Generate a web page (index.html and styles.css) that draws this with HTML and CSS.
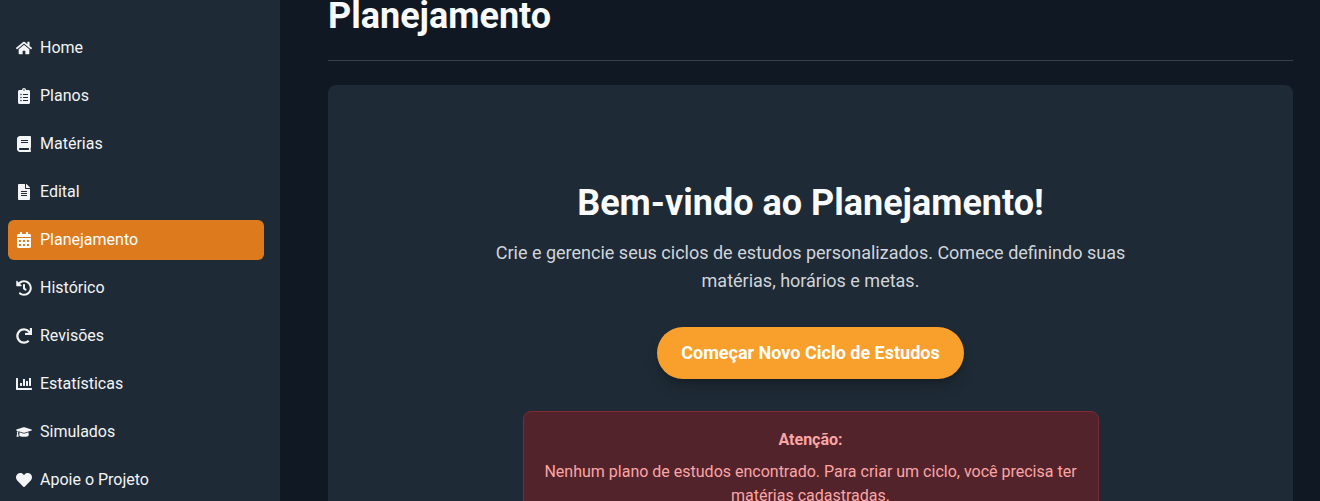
FILE: index.html
```html
<!DOCTYPE html>
<html lang="pt-BR">
<head>
<meta charset="utf-8">
<title>Planejamento</title>
<link rel="stylesheet" href="styles.css">
</head>
<body>
<div class="app">
  <nav class="sidebar">
    <a class="nav-item"><svg class="icon" viewBox="0 0 576 512"><path d="M280.37 148.26L96 300.11V464a16 16 0 0 0 16 16l112.06-.29a16 16 0 0 0 15.92-16V368a16 16 0 0 1 16-16h64a16 16 0 0 1 16 16v95.64a16 16 0 0 0 16 16.05L464 480a16 16 0 0 0 16-16V300L295.67 148.26a12.19 12.19 0 0 0-15.3 0zM571.6 251.47L488 182.56V44.05a12 12 0 0 0-12-12h-56a12 12 0 0 0-12 12v72.61L318.47 43a48 48 0 0 0-61 0L4.34 251.47a12 12 0 0 0-1.6 16.9l25.5 31A12 12 0 0 0 45.15 301l235.22-193.74a12.19 12.19 0 0 1 15.3 0L530.9 301a12 12 0 0 0 16.9-1.6l25.5-31a12 12 0 0 0-1.7-16.93z"/></svg><span class="nav-label">Home</span></a>
    <a class="nav-item"><svg class="icon" viewBox="0 0 384 512"><path d="M336 64h-80c0-35.3-28.7-64-64-64s-64 28.7-64 64H48C21.5 64 0 85.5 0 112v352c0 26.5 21.5 48 48 48h288c26.5 0 48-21.5 48-48V112c0-26.5-21.5-48-48-48zM96 424c-13.3 0-24-10.7-24-24s10.7-24 24-24 24 10.7 24 24-10.7 24-24 24zm0-96c-13.3 0-24-10.7-24-24s10.7-24 24-24 24 10.7 24 24-10.7 24-24 24zm0-96c-13.3 0-24-10.7-24-24s10.7-24 24-24 24 10.7 24 24-10.7 24-24 24zm96-192c13.3 0 24 10.7 24 24s-10.7 24-24 24-24-10.7-24-24 10.7-24 24-24zm128 368c0 4.4-3.6 8-8 8H168c-4.4 0-8-3.6-8-8v-16c0-4.4 3.6-8 8-8h144c4.4 0 8 3.6 8 8v16zm0-96c0 4.4-3.6 8-8 8H168c-4.4 0-8-3.6-8-8v-16c0-4.4 3.6-8 8-8h144c4.4 0 8 3.6 8 8v16zm0-96c0 4.4-3.6 8-8 8H168c-4.4 0-8-3.6-8-8v-16c0-4.4 3.6-8 8-8h144c4.4 0 8 3.6 8 8v16z"/></svg><span class="nav-label">Planos</span></a>
    <a class="nav-item"><svg class="icon" viewBox="0 0 448 512"><path d="M448 360V24c0-13.3-10.7-24-24-24H96C43 0 0 43 0 96v320c0 53 43 96 96 96h328c13.3 0 24-10.7 24-24v-16c0-7.5-3.5-14.3-8.9-18.7-4.2-15.4-4.2-59.3 0-74.7 5.4-4.3 8.9-11.1 8.9-18.6zM128 134c0-3.3 2.7-6 6-6h212c3.3 0 6 2.7 6 6v20c0 3.3-2.7 6-6 6H134c-3.3 0-6-2.7-6-6v-20zm0 64c0-3.3 2.7-6 6-6h212c3.3 0 6 2.7 6 6v20c0 3.3-2.7 6-6 6H134c-3.3 0-6-2.7-6-6v-20zm253.4 250H96c-17.7 0-32-14.3-32-32 0-17.6 14.4-32 32-32h285.4c-1.9 17.1-1.9 46.9 0 64z"/></svg><span class="nav-label">Matérias</span></a>
    <a class="nav-item"><svg class="icon" viewBox="0 0 384 512"><path d="M224 136V0H24C10.7 0 0 10.7 0 24v464c0 13.3 10.7 24 24 24h336c13.3 0 24-10.7 24-24V160H248c-13.2 0-24-10.8-24-24zm64 236c0 6.6-5.4 12-12 12H108c-6.6 0-12-5.4-12-12v-8c0-6.6 5.4-12 12-12h168c6.6 0 12 5.4 12 12v8zm0-64c0 6.6-5.4 12-12 12H108c-6.6 0-12-5.4-12-12v-8c0-6.6 5.4-12 12-12h168c6.6 0 12 5.4 12 12v8zm0-72v8c0 6.6-5.4 12-12 12H108c-6.6 0-12-5.4-12-12v-8c0-6.6 5.4-12 12-12h168c6.6 0 12 5.4 12 12zm96-114.1v6.1H256V0h6.1c6.4 0 12.5 2.5 17 7l97.9 98c4.5 4.5 7 10.6 7 16.9z"/></svg><span class="nav-label">Edital</span></a>
    <a class="nav-item active"><svg class="icon" viewBox="0 0 448 512"><path d="M0 464c0 26.5 21.5 48 48 48h352c26.5 0 48-21.5 48-48V192H0v272zm320-196c0-6.6 5.4-12 12-12h40c6.6 0 12 5.4 12 12v40c0 6.6-5.4 12-12 12h-40c-6.6 0-12-5.4-12-12v-40zm0 128c0-6.6 5.4-12 12-12h40c6.6 0 12 5.4 12 12v40c0 6.6-5.4 12-12 12h-40c-6.6 0-12-5.4-12-12v-40zM192 268c0-6.6 5.4-12 12-12h40c6.6 0 12 5.4 12 12v40c0 6.6-5.4 12-12 12h-40c-6.6 0-12-5.4-12-12v-40zm0 128c0-6.6 5.4-12 12-12h40c6.6 0 12 5.4 12 12v40c0 6.6-5.4 12-12 12h-40c-6.6 0-12-5.4-12-12v-40zM64 268c0-6.6 5.4-12 12-12h40c6.6 0 12 5.4 12 12v40c0 6.6-5.4 12-12 12H76c-6.6 0-12-5.4-12-12v-40zm0 128c0-6.6 5.4-12 12-12h40c6.6 0 12 5.4 12 12v40c0 6.6-5.4 12-12 12H76c-6.6 0-12-5.4-12-12v-40zM400 64h-48V16c0-8.8-7.2-16-16-16h-32c-8.8 0-16 7.2-16 16v48H160V16c0-8.8-7.2-16-16-16h-32c-8.8 0-16 7.2-16 16v48H48C21.5 64 0 85.5 0 112v48h448v-48c0-26.5-21.5-48-48-48z"/></svg><span class="nav-label">Planejamento</span></a>
    <a class="nav-item"><svg class="icon" viewBox="0 0 512 512"><path d="M504 255.531c.253 136.64-111.18 248.372-247.82 248.468-59.015.042-113.223-20.53-155.822-54.911-11.077-8.94-11.905-25.541-1.839-35.607l11.267-11.267c8.609-8.609 22.353-9.551 31.891-1.984C173.062 425.135 212.781 440 256 440c101.705 0 184-82.311 184-184 0-101.705-82.311-184-184-184-48.814 0-93.149 18.969-126.068 49.932l50.754 50.754c10.08 10.08 2.941 27.314-11.313 27.314H24c-8.837 0-16-7.163-16-16V38.627c0-14.254 17.234-21.393 27.314-11.314l49.372 49.372C129.209 34.136 189.552 8 256 8c136.81 0 247.747 110.78 248 247.531zm-180.912 78.784l9.823-12.63c8.138-10.463 6.253-25.542-4.21-33.679L288 256.349V152c0-13.255-10.745-24-24-24h-16c-13.255 0-24 10.745-24 24v135.651l65.409 50.874c10.463 8.137 25.541 6.253 33.679-4.21z"/></svg><span class="nav-label">Histórico</span></a>
    <a class="nav-item"><svg class="icon" viewBox="0 0 512 512"><path d="M500.33 0h-47.41a12 12 0 0 0-12 12.57l4 82.76A247.42 247.42 0 0 0 256 8C119.34 8 7.9 119.53 8 256.19 8.1 393.07 119.1 504 256 504a247.1 247.1 0 0 0 166.18-63.91 12 12 0 0 0 .48-17.43l-34-34a12 12 0 0 0-16.38-.55A176 176 0 1 1 402.1 157.8l-101.53-4.87a12 12 0 0 0-12.57 12v47.41a12 12 0 0 0 12 12h200.33a12 12 0 0 0 12-12V12a12 12 0 0 0-12-12z"/></svg><span class="nav-label">Revisões</span></a>
    <a class="nav-item"><svg class="icon" viewBox="0 0 512 512"><path d="M332.8 320h38.4c6.4 0 12.8-6.4 12.8-12.8V172.8c0-6.4-6.4-12.8-12.8-12.8h-38.4c-6.4 0-12.8 6.4-12.8 12.8v134.4c0 6.4 6.4 12.8 12.8 12.8zm96 0h38.4c6.4 0 12.8-6.4 12.8-12.8V76.8c0-6.4-6.4-12.8-12.8-12.8h-38.4c-6.4 0-12.8 6.4-12.8 12.8v230.4c0 6.4 6.4 12.8 12.8 12.8zm-288 0h38.4c6.4 0 12.8-6.4 12.8-12.8v-70.4c0-6.4-6.4-12.8-12.8-12.8h-38.4c-6.4 0-12.8 6.4-12.8 12.8v70.4c0 6.4 6.4 12.8 12.8 12.8zm96 0h38.4c6.4 0 12.8-6.4 12.8-12.8V108.8c0-6.4-6.4-12.8-12.8-12.8h-38.4c-6.4 0-12.8 6.4-12.8 12.8v198.4c0 6.4 6.4 12.8 12.8 12.8zM496 384H64V80c0-8.84-7.16-16-16-16H16C7.16 64 0 71.16 0 80v336c0 17.67 14.33 32 32 32h464c8.84 0 16-7.16 16-16v-32c0-8.84-7.16-16-16-16z"/></svg><span class="nav-label">Estatísticas</span></a>
    <a class="nav-item"><svg class="icon" viewBox="0 0 640 512"><path d="M622.34 153.2L343.4 67.5c-15.2-4.67-31.6-4.67-46.79 0L17.66 153.2c-23.54 7.23-23.54 38.36 0 45.59l48.63 14.94c-10.67 13.19-17.23 29.28-17.88 46.9C38.78 266.15 32 276.11 32 288c0 10.78 5.68 19.85 13.86 25.65L20.33 428.53C18.11 438.52 25.71 448 35.94 448h56.11c10.24 0 17.84-9.48 15.62-19.47L82.14 313.65C90.32 307.85 96 298.78 96 288c0-11.57-6.47-21.25-15.66-26.87.76-15.02 8.44-28.3 20.69-36.72L296.6 284.5c9.06 2.78 26.44 6.25 46.79 0l278.95-85.7c23.55-7.24 23.55-38.36 0-45.6zM352.79 315.09c-28.53 8.76-52.84 3.92-65.59 0l-145.02-44.55L128 384c0 35.35 85.96 64 192 64s192-28.65 192-64l-14.18-113.47-145.03 44.56z"/></svg><span class="nav-label">Simulados</span></a>
    <a class="nav-item"><svg class="icon" viewBox="0 0 512 512"><path d="M462.3 62.6C407.5 15.9 326 24.3 275.7 76.2L256 96.5l-19.7-20.3C186.1 24.3 104.5 15.9 49.7 62.6c-62.8 53.6-66.1 149.8-9.9 207.9l193.5 199.8c12.5 12.9 32.8 12.9 45.3 0l193.5-199.8c56.3-58.1 53-154.3-9.8-207.9z"/></svg><span class="nav-label">Apoie o Projeto</span></a>
  </nav>
  <main class="main">
    <h1 class="page-title">Planejamento</h1>
    <section class="card">
      <h2 class="card-title">Bem-vindo ao Planejamento!</h2>
      <p class="card-text">Crie e gerencie seus ciclos de estudos personalizados. Comece definindo suas matérias, horários e metas.</p>
      <button class="cta">Começar Novo Ciclo de Estudos</button>
      <div class="alert">
        <p class="alert-title">Atenção:</p>
        <p class="alert-text">Nenhum plano de estudos encontrado. Para criar um ciclo, você precisa ter matérias cadastradas.</p>
      </div>
    </section>
  </main>
</div>
</body>
</html>
```
FILE: styles.css
```css
* { box-sizing: border-box; }
html, body { margin: 0; height: 100%; overflow: hidden; }
body { background: #101824; color: #f3f4f6; font-family: Roboto, "Liberation Sans", sans-serif; }
.app { display: flex; height: 501px; overflow: hidden; }
.sidebar { width: 280px; flex: none; background: #1e2a35; padding: 28px 16px 0 8px; display: flex; flex-direction: column; gap: 8px; }
.nav-item { display: flex; align-items: center; gap: 8px; height: 40px; flex: none; padding: 0 8px; border-radius: 6px; font-size: 16px; color: #f3f4f6; }
.nav-item.active { background: #dd7a1e; color: #fff; }
.nav-label { padding-bottom: 2px; }
.icon { width: 16px; height: 16px; fill: currentColor; flex: none; }
.main { flex: 1; min-width: 0; padding: 0 27px 0 48px; }
.page-title { margin: -4px 0 24px; padding-bottom: 24px; font-size: 36px; line-height: 40px; font-weight: 700; color: #f9fafb; border-bottom: 1px solid #36414c; }
.card { background: #1e2a35; border-radius: 8px; padding: 96px 32px 0; display: flex; flex-direction: column; align-items: center; text-align: center; height: 500px; }
.card-title { margin: 0 0 14px; font-size: 36px; line-height: 44px; font-weight: 700; color: #f9fafb; }
.card-text { margin: 0 0 32px; max-width: 672px; font-size: 18px; line-height: 28px; color: #d1d5db; }
.cta { border: 0; height: 52px; padding: 0 24px; border-radius: 26px; background: #f99f2b; color: #fff; font: 700 18px/28px Roboto, sans-serif; box-shadow: 0 10px 15px -3px rgba(0,0,0,.2), 0 4px 6px -4px rgba(0,0,0,.2); }
.alert { margin-top: 32px; width: 576px; padding: 16px; background: #53232b; border: 1px solid #7f2a32; border-radius: 8px; color: #fca5a5; font-size: 16px; line-height: 24px; }
.alert-title { margin: 0 0 8px; font-weight: 700; }
.alert-text { margin: 0; }
```
